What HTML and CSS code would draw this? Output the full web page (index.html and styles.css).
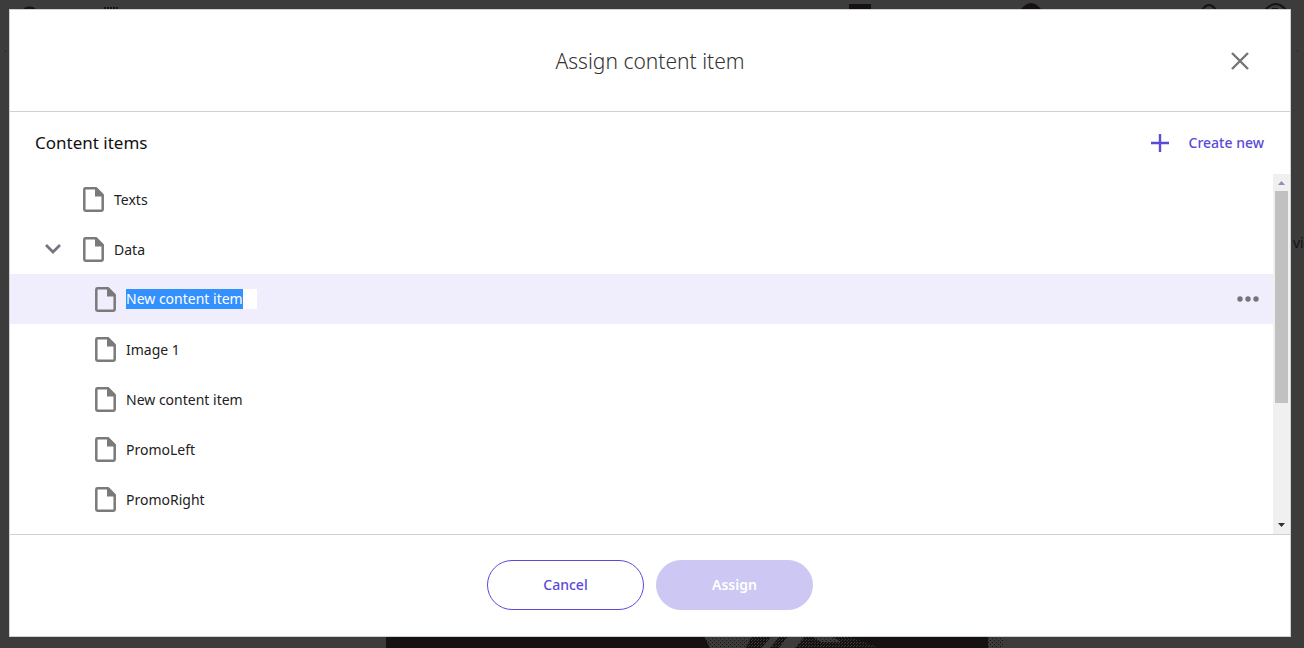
FILE: index.html
```html
<!DOCTYPE html>
<html lang="en">
<head>
    <meta charset="UTF-8">
    <meta name="viewport" content="width=device-width, initial-scale=1.0">
    <title>Assign content item</title>
    <link rel="stylesheet" href="styles.css">
</head>
<body>
    <!-- Page under the overlay -->
    <div class="backdrop" aria-hidden="true">
        <svg class="backdrop-top" width="1304" height="56" viewBox="0 0 1304 56" fill="none" stroke="#151211" stroke-width="2">
            <path d="M24 10a6 4 0 0 1 11 0"/>
            <path d="M27 9h5M104 8h15" stroke-dasharray="2 1"/>
            <path d="M849 4h22v5h-22z" fill="#151211" stroke="none"/>
            <path d="M1021 9q10-12 20 0z" fill="#151211" stroke="none"/>
            <path d="M1202 10q7-10 14 0M1265 10q11-12 21 0M1272 9h6"/>
            <path d="M5 51h1M1297 51h1" stroke-width="1"/>
        </svg>
        <span class="backdrop-text">vi</span>
        <svg class="backdrop-photo" width="618" height="12" viewBox="0 0 618 12">
            <defs>
                <pattern id="grain" width="4" height="4" patternUnits="userSpaceOnUse">
                    <rect width="4" height="4" fill="#3c3c3c"/>
                    <path d="M0 0h1v1H0zM2 2h1v1H2z" fill="#151211"/>
                </pattern>
                <pattern id="grain-dark" width="3" height="3" patternUnits="userSpaceOnUse">
                    <rect width="3" height="3" fill="#151211"/>
                    <path d="M0 0h1v1H0zM2 1h1v1H2z" fill="#3c3c3c"/>
                </pattern>
            </defs>
            <path d="M0 0h602v12H0z" fill="#151211"/>
            <path d="M318 0h48l-6 12h-36z" fill="url(#grain)"/>
            <path d="M366 0h95l34 12H360z" fill="url(#grain-dark)"/>
            <path d="M386 0h8l-10 12h-9zM402 0h17l-10 12h-16z" fill="#3c3c3c"/>
            <path d="M425 0h20l10 6h-20z" fill="url(#grain)"/>
            <path d="M602 0h16v12h-16z" fill="url(#grain)"/>
        </svg>
    </div>

    <svg class="symbols" aria-hidden="true">
        <symbol id="icon-page" viewBox="0 0 21 25">
            <path d="M2.500 1.300h10.500l6.700 6.700v14.500q0 1.200-1.200 1.200h-16q-1.200 0-1.200-1.200v-20q0-1.200 1.200-1.200z" fill="none" stroke="#7a7a7a" stroke-width="2.500"/>
            <path d="M12 1h2l6 6v2.500h-8z" fill="#7a7a7a"/>
        </symbol>
    </svg>

    <div class="dialog" role="dialog" aria-labelledby="dialog-title">
        <div class="dialog-header">
            <h1 id="dialog-title">Assign content item</h1>
            <button class="close" type="button" aria-label="Close">
                <svg width="18" height="18" viewBox="0 0 18 18"><path d="M1 1l16 16M17 1L1 17" stroke="#757575" stroke-width="2.400"/></svg>
            </button>
        </div>

        <div class="toolbar">
            <h2>Content items</h2>
            <button class="create" type="button">
                <svg width="18" height="18" viewBox="0 0 18 18"><path d="M0 9h18M9 0v18" stroke="#5a4ad8" stroke-width="2.400"/></svg>
                Create new
            </button>
        </div>

        <div class="list">
            <ul class="tree">
                <li class="item">
                    <svg class="page"><use href="#icon-page"/></svg>
                    <span>Texts</span>
                </li>
                <li class="item">
                    <button class="toggle" type="button" aria-label="Collapse Data">
                        <svg width="16" height="10" viewBox="0 0 16 10"><path d="M1 1l7 7 7-7" fill="none" stroke="#757580" stroke-width="2.800"/></svg>
                    </button>
                    <svg class="page"><use href="#icon-page"/></svg>
                    <span>Data</span>
                </li>
                <li class="item child selected">
                    <svg class="page"><use href="#icon-page"/></svg>
                    <input class="rename" id="rename" type="text" value="New content item" aria-label="Name" spellcheck="false">
                    <button class="more" type="button" aria-label="More actions">
                        <svg width="22" height="6" viewBox="0 0 22 6" fill="#757575"><circle cx="3" cy="3" r="2.700"/><circle cx="11" cy="3" r="2.700"/><circle cx="19" cy="3" r="2.700"/></svg>
                    </button>
                </li>
                <li class="item child">
                    <svg class="page"><use href="#icon-page"/></svg>
                    <span>Image 1</span>
                </li>
                <li class="item child">
                    <svg class="page"><use href="#icon-page"/></svg>
                    <span>New content item</span>
                </li>
                <li class="item child">
                    <svg class="page"><use href="#icon-page"/></svg>
                    <span>PromoLeft</span>
                </li>
                <li class="item child">
                    <svg class="page"><use href="#icon-page"/></svg>
                    <span>PromoRight</span>
                </li>
            </ul>
            <div class="scrollbar" aria-hidden="true">
                <svg width="17" height="17" viewBox="0 0 17 17"><path d="M5 11l3.500-4 3.500 4z" fill="#8f8fb5"/></svg>
                <div class="track"><div class="thumb"></div></div>
                <svg width="17" height="17" viewBox="0 0 17 17"><path d="M5 6h7l-3.500 4z" fill="#303030"/></svg>
            </div>
        </div>

        <div class="dialog-footer">
            <button class="btn" type="button">Cancel</button>
            <button class="btn btn-primary" type="button" disabled>Assign</button>
        </div>
    </div>

    <script>
        const rename = document.getElementById('rename');
        rename.focus();
        rename.select();
    </script>
</body>
</html>
```
FILE: styles.css
```css
* {
    box-sizing: border-box;
}
body {
    margin: 0;
    min-height: 100vh;
    padding: 9px 13px 11px 9px;
    display: flex;
    position: relative;
    overflow: hidden;
    background-color: #3c3c3c;
    font-family: "Noto Sans", "Open Sans", sans-serif;
    font-size: 14px;
    line-height: 20px;
    color: #222;
}
button {
    padding: 0;
    border: none;
    background: none;
    font: inherit;
    cursor: pointer;
}
svg {
    display: block;
    flex-shrink: 0;
}
.symbols {
    position: absolute;
    width: 0;
    height: 0;
}

/* Page under the overlay */
.backdrop {
    position: absolute;
    inset: 0;
    overflow: hidden;
}
.backdrop-top {
    position: absolute;
    top: 0;
    left: 0;
}
.backdrop-text {
    position: absolute;
    top: 233px;
    left: 1293px;
    color: #151211;
}
.backdrop-photo {
    position: absolute;
    bottom: 0;
    left: 386px;
}

/* Dialog */
.dialog {
    flex: 1;
    min-width: 0;
    position: relative;
    display: flex;
    flex-direction: column;
    border: 1px solid #d0d0d0;
    background-color: #fff;
}
.dialog-header {
    display: grid;
    grid-template-columns: 1fr auto 1fr;
    align-items: center;
    height: 102px;
    padding: 0 41px;
    border-bottom: 1px solid #d0d0d0;
}
.dialog-header h1 {
    grid-column: 2;
    margin: 0;
    font-size: 21px;
    font-weight: 300;
    line-height: 28px;
    color: #333;
}
.close {
    justify-self: end;
}

/* Toolbar */
.toolbar {
    display: flex;
    justify-content: space-between;
    align-items: center;
    height: 62px;
    padding: 0 26px 0 25px;
}
.toolbar h2 {
    margin: 0;
    font-size: 17px;
    font-weight: 400;
    color: #111;
}
.create {
    display: flex;
    align-items: center;
    gap: 20px;
    color: #5a4ad8;
    font-weight: 500;
}

/* Content tree */
.list {
    flex: 1;
    min-height: 0;
    display: flex;
}
.tree {
    flex: 1;
    margin: 0;
    padding: 0;
    list-style: none;
}
.item {
    position: relative;
    display: flex;
    align-items: center;
    gap: 10px;
    height: 50px;
    padding: 0 14px 0 73px;
}
.item span {
    padding-top: 2px;
}
.child {
    padding-left: 85px;
}
.selected {
    background-color: #f0edfd;
}
.page {
    width: 21px;
    height: 25px;
}
.toggle {
    position: absolute;
    left: 35px;
}
.rename {
    width: 131px;
    height: 20px;
    padding: 0;
    border: none;
    outline: none;
    background-color: #fff;
    font: inherit;
    color: inherit;
}
.rename::selection {
    background-color: #3390ff;
    color: #fff;
}
.more {
    margin-left: auto;
}

/* Scrollbar */
.scrollbar {
    width: 17px;
    display: flex;
    flex-direction: column;
    background-color: #f0f0f0;
}
.track {
    flex: 1;
}
.thumb {
    height: 65%;
    margin: 0 2px;
    background-color: #c1c1c1;
}

/* Footer */
.dialog-footer {
    display: flex;
    justify-content: center;
    align-items: center;
    gap: 12px;
    height: 102px;
    padding-bottom: 2px;
    border-top: 1px solid #d0d0d0;
}
.btn {
    width: 157px;
    height: 50px;
    border: 1px solid #5a4ad8;
    border-radius: 25px;
    color: #5a4ad8;
    font-weight: 500;
}
.btn-primary {
    border-color: #ccc8f3;
    background-color: #ccc8f3;
    color: #fff;
    font-weight: 600;
}
```
